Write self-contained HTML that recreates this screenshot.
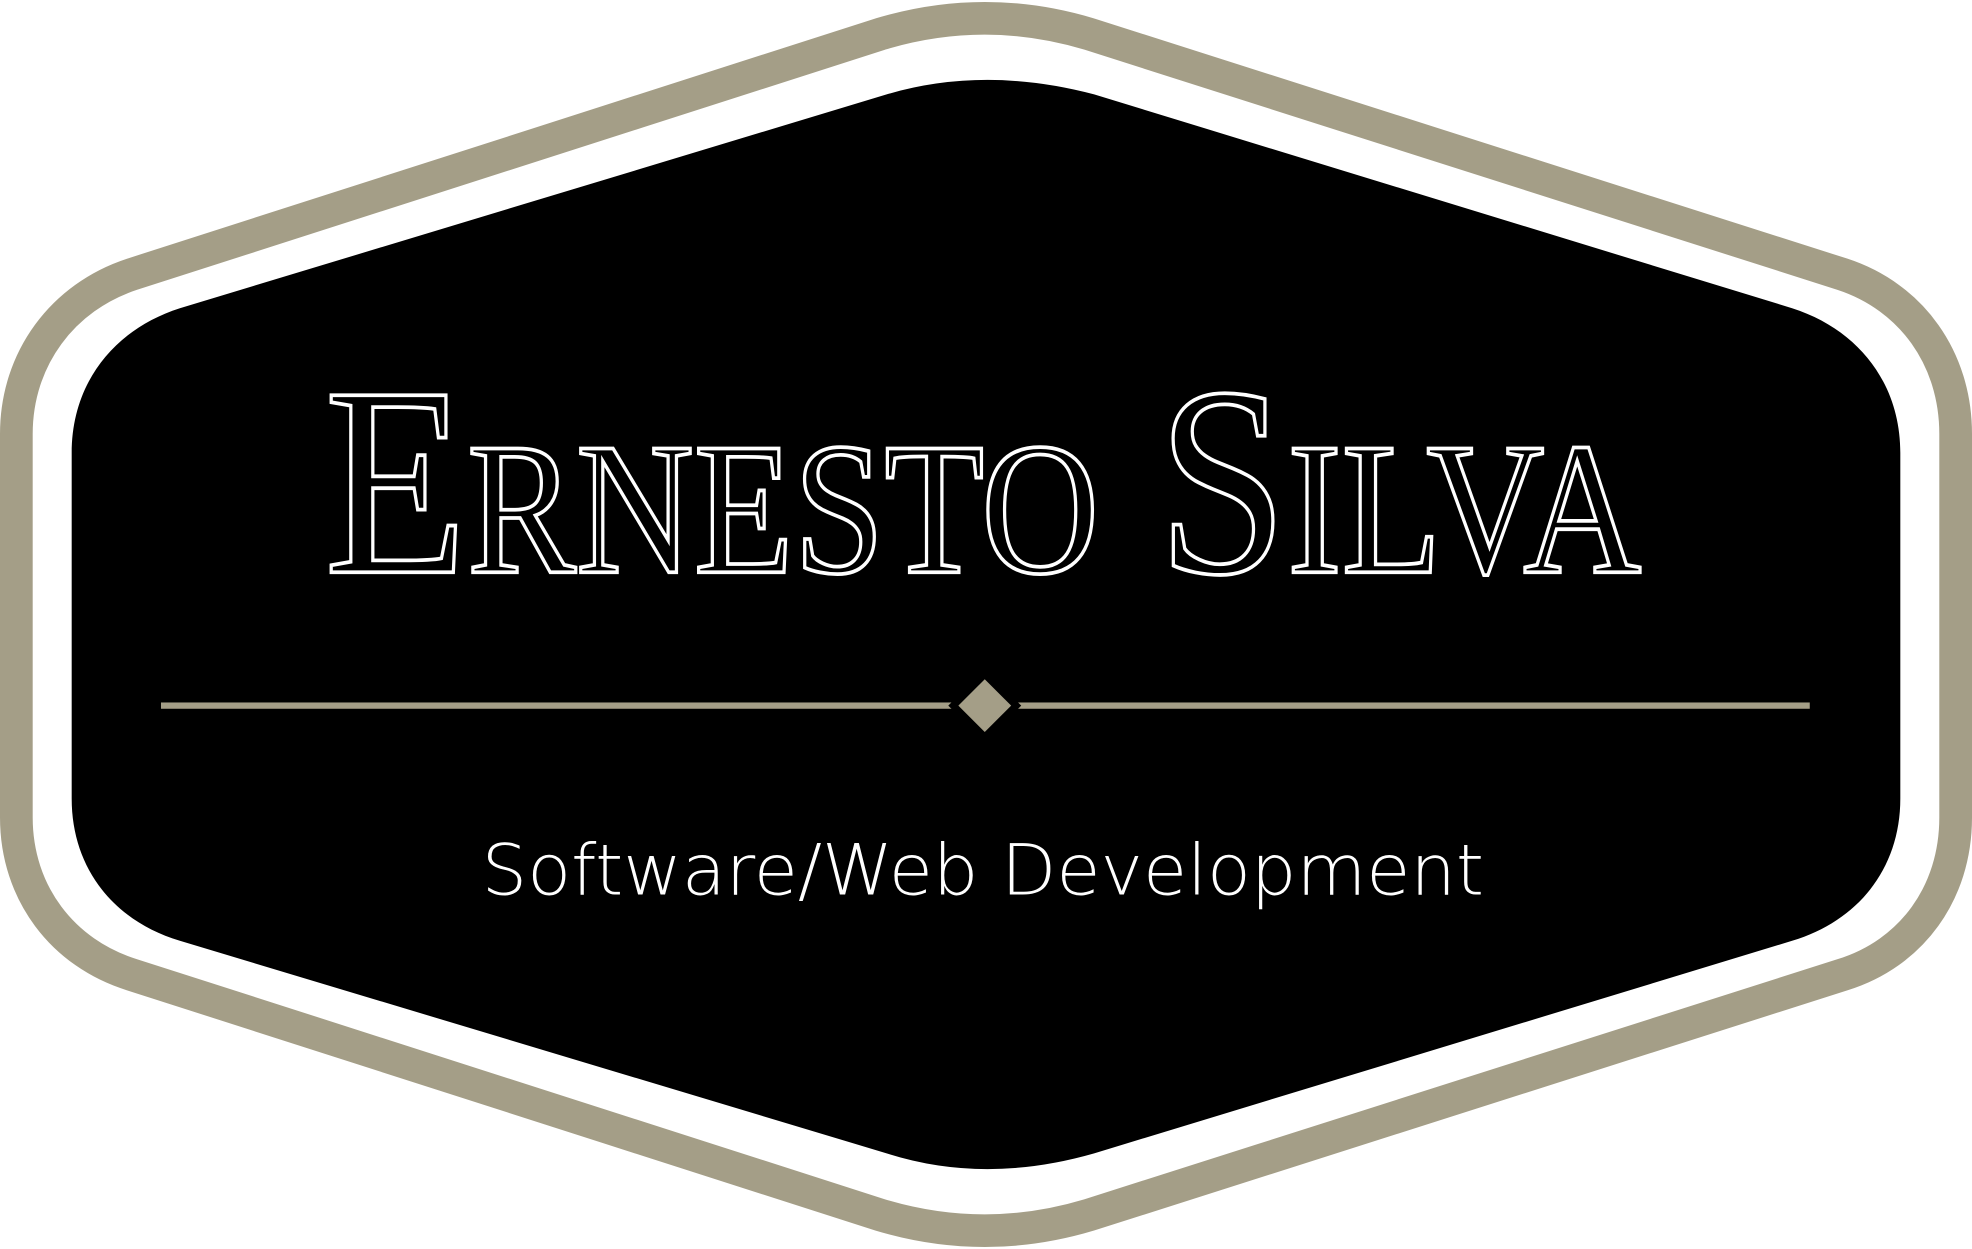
<!DOCTYPE html>
<html><head><meta charset="utf-8"><style>
html,body{margin:0;padding:0;background:#fff;width:1972px;height:1249px;overflow:hidden}
svg{display:block}
</style></head><body>
<svg width="1972" height="1249" viewBox="0 0 1568 993" xmlns="http://www.w3.org/2000/svg">
<rect width="1568" height="993" fill="#fff"/>
<path d="M 700 27 Q 783 2 866 27 L 1465 218 C 1520 236 1555 285 1555 345 L 1555 650 C 1555 710 1520 758 1465 775 L 866 966 Q 783 991 700 966 L 105 775 C 50 758 13 710 13 650 L 13 345 C 13 285 50 236 105 218 Z" fill="none" stroke="#a49e87" stroke-width="26"/>
<path d="M 705 75 Q 783 52 870 75 L 1425 245 C 1478 262 1511 305 1511 360 L 1511 635 C 1511 690 1478 732 1425 748 L 870 917 Q 783 942 705 917 L 143 748 C 90 732 57 690 57 635 L 57 360 C 57 305 90 262 143 245 Z" fill="#000"/>
<rect x="128" y="558.5" width="1311" height="5" fill="#a49e87"/>
<polygon points="783,532 812,561 783,590 754,561" fill="#000"/>
<polygon points="783,540 804,561 783,582 762,561" fill="#a49e87"/>
<text x="258" y="455" font-family="Liberation Serif, serif" font-size="215" font-variant="small-caps" textLength="1047" lengthAdjust="spacingAndGlyphs" fill="none" stroke="#fff" stroke-width="3">Ernesto Silva</text>
<text x="383" y="711" font-family="DejaVu Sans, Liberation Sans, sans-serif" font-weight="200" font-size="56" textLength="797" lengthAdjust="spacingAndGlyphs" fill="#fff">Software/Web Development</text>
</svg>
</body></html>
